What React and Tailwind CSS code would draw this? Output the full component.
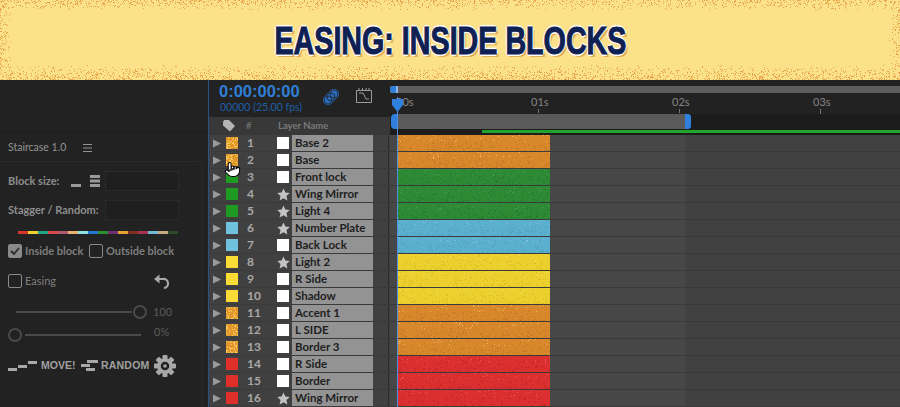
import { Pointer } from "lucide-react";

const uiFont = "font-['Lato',sans-serif]";

const layers = [
  { n: 1, name: "Base 2", color: "orange" },
  { n: 2, name: "Base", color: "orange" },
  { n: 3, name: "Front lock", color: "green" },
  { n: 4, name: "Wing Mirror", color: "green", star: true },
  { n: 5, name: "Light 4", color: "green", star: true },
  { n: 6, name: "Number Plate", color: "blue", star: true },
  { n: 7, name: "Back Lock", color: "blue" },
  { n: 8, name: "Light 2", color: "yellow", star: true },
  { n: 9, name: "R Side", color: "yellow" },
  { n: 10, name: "Shadow", color: "yellow" },
  { n: 11, name: "Accent 1", color: "orange" },
  { n: 12, name: "L SIDE", color: "orange" },
  { n: 13, name: "Border 3", color: "orange" },
  { n: 14, name: "R Side", color: "red" },
  { n: 15, name: "Border", color: "red" },
  { n: 16, name: "Wing Mirror", color: "red", star: true },
];

const swatchClass = {
  orange: "bg-[#e3982c]",
  green: "bg-[#1f9a22]",
  blue: "bg-[#6fc1dd]",
  yellow: "bg-[#fbdb35]",
  red: "bg-[#df2f2a]",
};

const barClass = {
  orange: "bg-[#d8872b]",
  green: "bg-[#2e8a35]",
  blue: "bg-[#5cb0cf]",
  yellow: "bg-[#ecd02e]",
  red: "bg-[#dc3030]",
};

const speckColor = {
  orange: ["#eeb96a", "#bf7823"],
  green: ["#4a9c50", "#26782d"],
  blue: ["#84c3da", "#509fbd"],
  yellow: ["#f4df62", "#d9bc24"],
  red: ["#e95a52", "#c32626"],
};

// small seeded random so the speckle stays the same on every render
function makeRandom(seed) {
  let s = seed;
  return () => {
    s = (s * 16807) % 2147483647;
    return s / 2147483647;
  };
}

function speckPath(seed, w, h, tries, keep) {
  const rand = makeRandom(seed);
  let d = "";
  for (let i = 0; i < tries; i++) {
    const x = Math.floor(rand() * w);
    const y = Math.floor(rand() * h);
    if (rand() < keep(x, y)) d += `M${x} ${y}h1v1h-1z`;
  }
  return d;
}

const bannerSpecks = speckPath(7, 900, 80, 26000, (x, y) => {
  const top = Math.max(0, 1 - y / 10);
  const bottom = Math.max(0, (y - 64) / 16);
  const left = Math.max(0, 1 - x / 12) * 0.6;
  const right = Math.max(0, (x - 888) / 12) * 0.6;
  return Math.max(top * 0.7, bottom * 0.85, left, right);
});

function Banner() {
  return (
    <div className="relative h-[80px] shrink-0 bg-[#fbe28a] flex items-center justify-center overflow-hidden">
      <svg className="absolute inset-0" width="900" height="80">
        <path d={bannerSpecks} fill="#e8a64c" />
      </svg>
      <h1 className="relative scale-x-[0.735] whitespace-nowrap font-['Liberation_Sans',sans-serif] font-bold text-[39px] leading-none text-[#0f2052] [-webkit-text-stroke:1px_#0f2052] [text-shadow:2px_0_0_#fff,-2px_0_0_#fff,0_2px_0_#fff,0_-2px_0_#fff,3px_3px_0_#e6ad58]">
        EASING: INSIDE BLOCKS
      </h1>
    </div>
  );
}

function Checkbox({ checked }) {
  return (
    <span className={`w-[14px] h-[14px] shrink-0 rounded-[2px] border border-[#8a8a8a] flex items-center justify-center ${checked ? "bg-[#8a8a8a]" : ""}`}>
      {checked && (
        <svg width="12" height="12" viewBox="0 0 12 12">
          <path d="M2 6l3 3 5-6" fill="none" stroke="#2a2a2a" strokeWidth="1.8" />
        </svg>
      )}
    </span>
  );
}

function Slider({ value, label, knobLeft }) {
  return (
    <div className="flex items-center h-[16px] pl-[8px]">
      {knobLeft && <span className="w-[14px] h-[14px] rounded-full border-2 border-[#4a4a4a] shrink-0" />}
      <span className={`h-[2px] bg-[#4a4a4a] ${knobLeft ? "w-[116px] ml-[3px]" : "w-[116px] ml-[8px]"}`} />
      {!knobLeft && <span className="w-[14px] h-[14px] rounded-full border-2 border-[#4a4a4a] shrink-0 ml-[1px]" />}
      <span className={`text-[11px] text-[#5c5c5c] ${knobLeft ? "ml-[13px] -mt-[6px]" : "ml-[6px]"}`}>{label || value}</span>
    </div>
  );
}

const stripColors = ["#d8342c", "#f0d030", "#22a585", "#d8484c", "#b05a70", "#e8b070", "#8fe0e0", "#2478d0", "#2a9030", "#703070", "#e8a030", "#803020", "#a83050", "#70b8d8", "#c8a880", "#2a4a2a"];

function Sidebar() {
  return (
    <aside className={`w-[208px] shrink-0 bg-[#222222] ${uiFont} text-[#8e8e8e] flex flex-col`}>
      <div className="h-[52px] shrink-0 border-b border-[#1c1c1c]" />
      <div className="flex items-center h-[29px] pt-[2px] pl-[8px] gap-[13px] text-[10.500px] text-[#949494]">
        <span className="w-[62px] whitespace-nowrap">Staircase 1.0</span>
        <svg width="9" height="8" viewBox="0 0 9 8">
          <path d="M0 .5h9M0 4h9M0 7.5h9" stroke="#949494" />
        </svg>
      </div>
      <div className="w-[203px] border-t border-r border-[#292929] rounded-tr-[4px] flex-1">
        <div className="flex items-center h-[20px] mt-[9px] pl-[8px] text-[11px]">
          <span className="w-[63px] font-bold whitespace-nowrap">Block size:</span>
          <svg width="34" height="16" viewBox="0 0 34 16">
            <rect x="0" y="11" width="10" height="3" fill="#9a9a9a" />
            <rect x="19" y="2" width="10" height="3" fill="#9a9a9a" />
            <rect x="19" y="6.500" width="10" height="3" fill="#9a9a9a" />
            <rect x="19" y="11" width="10" height="3" fill="#9a9a9a" />
          </svg>
          <div className="w-[74px] h-[20px] border border-dotted border-[#333] bg-[#1f1f1f]" />
        </div>
        <div className="flex items-center h-[20px] mt-[9px] pl-[8px] text-[11px]">
          <span className="w-[97px] font-bold whitespace-nowrap">Stagger / Random:</span>
          <div className="w-[74px] h-[20px] border border-dotted border-[#333] bg-[#1f1f1f]" />
        </div>
        <div className="flex h-[3px] w-[160px] mt-[11px] ml-[18px]">
          {stripColors.map((c, i) => (
            <span key={i} className="flex-1" style={{ backgroundColor: c }} />
          ))}
        </div>
        <div className="flex items-center h-[16px] mt-[9px] pl-[8px] text-[11px] font-bold">
          <Checkbox checked />
          <span className="ml-[3px] w-[64px] text-[#7e7e7e] whitespace-nowrap">Inside block</span>
          <Checkbox />
          <span className="ml-[3px] text-[#7e7e7e] whitespace-nowrap">Outside block</span>
        </div>
        <div className="flex items-center h-[16px] mt-[14px] pl-[8px] text-[11px]">
          <Checkbox />
          <span className="ml-[3px] w-[127px] text-[#7e7e7e]">Easing</span>
          <svg width="18" height="18" viewBox="0 0 18 18" className="mt-[3px]">
            <path d="M4 5h7a4.500 4.500 0 0 1 1 9" fill="none" stroke="#a8a8a8" strokeWidth="2.200" />
            <path d="M7.500 0.500v9L2 5z" fill="#a8a8a8" />
          </svg>
        </div>
        <div className="mt-[15px]">
          <Slider value="100" />
        </div>
        <div className="mt-[7px]">
          <Slider label="0%" knobLeft />
        </div>
        <div className="flex items-center h-[24px] mt-[11px] pl-[8px] font-['Liberation_Sans',sans-serif] font-bold text-[10.500px] text-[#a0a0a0]">
          <svg width="30" height="12" viewBox="0 0 30 12" className="mr-[3px]">
            <path d="M0 8h9v3H0zM10 5h9v3h-9zM20 1h9v3h-9z" fill="#a8a8a8" />
          </svg>
          <span className="w-[40px]">MOVE!</span>
          <svg width="18" height="12" viewBox="0 0 18 12" className="mr-[2px]">
            <path d="M6 0h11v3H6zM0 4h9v3H0zM5 8h9v3H5z" fill="#a8a8a8" />
          </svg>
          <span className="w-[53px] tracking-[0.2px]">RANDOM</span>
          <svg width="22" height="22" viewBox="0 0 22 22">
            <g fill="#a8a8a8">
              {[0, 45, 90, 135, 180, 225, 270, 315].map((a) => (
                <rect key={a} x="8.500" y="0" width="5" height="5" rx="1" transform={`rotate(${a} 11 11)`} />
              ))}
            </g>
            <circle cx="11" cy="11" r="6" fill="none" stroke="#a8a8a8" strokeWidth="3.500" />
            <circle cx="11" cy="11" r="1.800" fill="#a8a8a8" />
          </svg>
        </div>
      </div>
    </aside>
  );
}

function TopLeft() {
  return (
    <div className={`w-[181px] shrink-0 flex flex-col ${uiFont}`}>
      <div className="h-[37px] flex items-start pl-[10px] pt-[1px] bg-[#222222]">
        <div className="w-[100px]">
          <div className="text-[16.500px] leading-[20px] font-bold text-[#2f7fd6] whitespace-nowrap font-['Liberation_Sans',sans-serif]">0:00:00:00</div>
          <div className="text-[10.500px] leading-[12px] pl-[1px] text-[#1f5ea8] whitespace-nowrap">00000 (25.00 fps)</div>
        </div>
        <svg width="18" height="18" viewBox="0 0 18 18" className="mt-[7px] ml-[3px]">
          <g fill="#2a6bbd">
            <circle cx="6" cy="12" r="5" />
            <circle cx="9" cy="9" r="5" />
            <circle cx="12" cy="6" r="5" />
          </g>
          <g fill="none" stroke="#222" strokeWidth="0.800">
            <circle cx="6" cy="12" r="4" />
            <circle cx="9" cy="9" r="4" />
            <circle cx="12" cy="6" r="4" />
          </g>
        </svg>
        <svg width="16" height="16" viewBox="0 0 16 16" className="mt-[7px] ml-[16px]">
          <path d="M.5 2.500h15v12H.5z" fill="none" stroke="#9a9a9a" />
          <path d="M3 5h4l3 6h3" fill="none" stroke="#9a9a9a" />
          <path d="M3 0v2M6.500 0v2M10 0v2M13 0v2" stroke="#9a9a9a" />
        </svg>
      </div>
      <div className="h-[18px] bg-[#383838] flex items-center text-[9.500px] text-[#7a7a7a]">
        <svg width="12" height="12" viewBox="0 0 12 12" className="ml-[14px]">
          <path d="M0 1.500 L1.500 0H6l6 6-5 5.500-7-6z" fill="#b4b4b4" />
        </svg>
        <span className="ml-[11px] w-[15px]">#</span>
        <span className="ml-[17px] font-bold">Layer Name</span>
      </div>
    </div>
  );
}

function Ruler() {
  return (
    <div className={`flex flex-col flex-1 ${uiFont}`}>
      <div className="h-[13px] pt-[6px] bg-[#222222]">
        <div className="h-[7px] bg-[#5e5e5e] flex">
          <span className="w-[6px] bg-[#2f80dc] rounded-l-[4px]" />
          <span className="w-[2px] bg-[#8fb7e3]" />
        </div>
      </div>
      <div className="h-[21px] pt-[2px] bg-[#222222] flex text-[11px] text-[#858585] leading-[13px]">
        <span className="w-[141px] pl-[6px]">00s</span>
        <span className="w-[141px] flex flex-col">01s<span className="w-px h-[4px] mt-[1px] bg-[#777] ml-[7px]" /></span>
        <span className="w-[141px] flex flex-col">02s<span className="w-px h-[4px] mt-[1px] bg-[#777] ml-[7px]" /></span>
        <span className="flex flex-col">03s<span className="relative w-px h-[10px] mt-[1px] bg-[#777] ml-[7px]" /></span>
      </div>
      <div className="h-[15px] bg-[#1c1c1c] flex pl-[1px]">
        <span className="w-[7px] bg-[#2f80dc] rounded-l-[4px]" />
        <span className="w-[287px] bg-[#5a5a5a]" />
        <span className="w-[6px] bg-[#2f80dc] rounded-r-[3px]" />
      </div>
      <div className="h-[6px] pt-[1px] bg-[#1c1c1c] flex items-start">
        <span className="w-[92px]" />
        <span className="flex-1 h-[3px] bg-[#22a52f]" />
      </div>
    </div>
  );
}

function Row({ layer }) {
  const [light, dark] = speckColor[layer.color];
  const speckled = layer.color === "orange";
  const lightSpecks = speckPath(layer.n * 131 + 3, 152, 7, 30, () => 1);
  const darkSpecks = speckPath(layer.n * 173 + 5, 152, 16, 420, (x, y) => y / 16);
  return (
    <div className={`flex h-[17px] border-b border-[#3a3a3a] ${uiFont}`}>
      <div className="w-[181px] shrink-0 flex items-center bg-[#404040]">
        <svg width="9" height="9" viewBox="0 0 9 9" className="ml-[4px]">
          <path d="M0 .5 8 4.500 0 8.500z" fill="#9a9a9a" />
        </svg>
        <span className={`relative w-[12px] h-[12px] ml-[4px] overflow-hidden ${swatchClass[layer.color]}`}>
          {speckled && (
            <svg className="absolute inset-0" width="12" height="12">
              <path d={speckPath(layer.n * 97 + 1, 12, 12, 40, () => 1)} fill="#f8cf60" />
            </svg>
          )}
        </span>
        <span className="w-[39px] pl-[9px] font-bold text-[12px] text-[#a8a8a8]">{layer.n}</span>
        <span className="w-[12px] h-[13px] flex items-center justify-center">
          {layer.star ? (
            <svg width="13" height="13" viewBox="0 0 24 24" className="shrink-0">
              <path d="M12 1l3.400 7.500 8.100.9-6 5.500 1.700 8.100L12 18.900l-7.200 4.100 1.700-8.100-6-5.500 8.100-.9z" fill="#c4c4c4" />
            </svg>
          ) : (
            <span className="w-[12px] h-[12px] shrink-0 bg-white" />
          )}
        </span>
        <span className="w-[81px] h-full ml-[3px] bg-[#939393] pl-[3px] font-bold text-[11.500px] leading-[16px] text-[#1e1e1e] whitespace-nowrap">{layer.name}</span>
        <span className="w-[15px]" />
        <span className="w-px h-full bg-[#2c2c2c]" />
      </div>
      <div className="flex flex-1 bg-[#474747]">
        <span className="w-[8px]" />
        <span className={`relative w-[152px] h-[16px] overflow-hidden ${barClass[layer.color]}`}>
          <svg className="absolute inset-0" width="152" height="16">
            <path d={lightSpecks} fill={light} />
            <path d={darkSpecks} fill={dark} />
          </svg>
        </span>
        <span className="w-[135px]" />
        <span className="flex-1 bg-[#414141]" />
      </div>
    </div>
  );
}

export default function App() {
  return (
    <div className="w-[900px] h-[407px] overflow-hidden flex flex-col bg-[#222222]">
      <Banner />
      <div className="flex flex-1 min-h-0">
        <Sidebar />
        <span className="w-px shrink-0 bg-[#2b4f86]" />
        <div className="relative flex-1 flex flex-col min-w-0">
          <div className="flex h-[55px] shrink-0">
            <TopLeft />
            <Ruler />
          </div>
          {layers.map((l) => (
            <Row key={l.n} layer={l} />
          ))}
          {/* playhead */}
          <div className="absolute left-[188px] top-[17px] bottom-0 w-px bg-[#4f8fe0]" />
          <svg className="absolute left-[183px] top-[19px]" width="11" height="13" viewBox="0 0 11 13">
            <path d="M0 0h11v6L5.500 13 0 6z" fill="#2f80dc" />
          </svg>
          {/* hand cursor */}
          <Pointer className="absolute left-[15px] top-[81px]" size={17} fill="#fff" stroke="#000" strokeWidth={1.500} />
        </div>
      </div>
    </div>
  );
}
